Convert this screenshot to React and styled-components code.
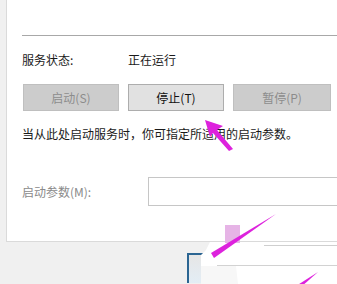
import styled, { createGlobalStyle } from 'styled-components';

const GlobalStyle = createGlobalStyle`
  html, body {
    margin: 0;
    padding: 0;
    background: #f0f0f0;
  }
  body {
    font-family: "Noto Sans CJK SC", "Noto Sans", sans-serif;
    font-size: 12px;
    color: #1a1a1a;
  }
`;

const Window = styled.div`
  position: relative;
  width: 337px;
  height: 284px;
  overflow: hidden;
  background: #f0f0f0;
  padding-left: 6px;
  box-sizing: border-box;
  display: flex;
  flex-direction: column;
`;

const Panel = styled.div`
  height: 242px;
  box-sizing: border-box;
  background: #fff;
  border-left: 1px solid #dadada;
  border-bottom: 1px solid #dadada;
  padding-left: 15px;
  display: flex;
  flex-direction: column;
`;

const Divider = styled.div`
  margin-top: 35px;
  height: 1px;
  background: #a8a8a8;
`;

const FieldRow = styled.div`
  display: grid;
  grid-template-columns: ${props => props.$labelWidth}px 1fr;
  align-items: center;
  margin-top: ${props => props.$top}px;
  line-height: 16px;
`;

const Label = styled.span`
  color: ${props => props.$muted ? '#8a8a8a' : '#1a1a1a'};
  white-space: nowrap;
`;

const ButtonRow = styled.div`
  display: flex;
  gap: 9px;
  margin: 16px 0 0 1px;
`;

const Button = styled.div`
  width: ${props => props.$width}px;
  height: 27px;
  box-sizing: border-box;
  display: flex;
  align-items: center;
  justify-content: center;
  font-size: 12px;
  background: ${props => props.$disabled ? '#cccccc' : '#e1e1e1'};
  border: 1px solid ${props => props.$disabled ? '#bfbfbf' : '#adadad'};
  color: ${props => props.$disabled ? '#8c8c8c' : '#111'};
`;

const Hint = styled.p`
  margin: 15px 0 0;
  line-height: 16px;
  white-space: nowrap;
`;

const Input = styled.div`
  height: 29px;
  box-sizing: border-box;
  border: 1px solid #c6c6c6;
  border-right: none;
  background: #fff;
`;

const Footer = styled.div`
  flex: 1;
  padding: 11px 0 0 181px;
`;

const DefaultButton = styled.div`
  width: 95px;
  height: 30px;
  box-sizing: border-box;
  border: 2px solid #2b6592;
  border-bottom: none;
  background: linear-gradient(180deg, #e6e6e6 0%, #e3edf5 100%);
`;

const Annotation = styled.svg`
  position: absolute;
  left: 0;
  top: 0;
  pointer-events: none;
`;

const magenta = '#dd22dd';

const App = () => {
  return (
    <Window>
      <GlobalStyle />
      <Panel>
        <Divider />
        <FieldRow $labelWidth={106} $top={16}>
          <Label>服务状态:</Label>
          <Label>正在运行</Label>
        </FieldRow>
        <ButtonRow>
          <Button $width={96} $disabled>启动(S)</Button>
          <Button $width={96}>停止(T)</Button>
          <Button $width={98} $disabled>暂停(P)</Button>
        </ButtonRow>
        <Hint>当从此处启动服务时，你可指定所适用的启动参数。</Hint>
        <FieldRow $labelWidth={126} $top={35}>
          <Label $muted>启动参数(M):</Label>
          <Input />
        </FieldRow>
      </Panel>
      <Footer>
        <DefaultButton />
      </Footer>

      <Annotation width="337" height="284" viewBox="0 0 337 284">
        {/* smeared white patch over the lower buttons */}
        <polygon points="210,242 337,242 337,284 201,284 201,255 206,250" fill="#fff" />
        <polygon points="201,266 236,266 238,284 201,284" fill="#f7f7f7" />
        <line x1="264" y1="245.5" x2="337" y2="245.5" stroke="#cfcfcf" />
        <line x1="217" y1="265.5" x2="337" y2="265.5" stroke="#d2d2d2" />

        {/* arrow pointing at 停止 */}
        <polygon points="205,120 223,126 217,130 233,149 229,151 213,133 210,137" fill={magenta} />

        {/* pink square */}
        <rect x="225" y="225" width="15" height="18" fill="#e6b4e6" />

        {/* strokes towards the bottom */}
        <polygon points="211,253 214,258 276,214" fill={magenta} />
        <polygon points="296,286 301,287 318,272" fill={magenta} />
      </Annotation>
    </Window>
  );
};

export default App;
